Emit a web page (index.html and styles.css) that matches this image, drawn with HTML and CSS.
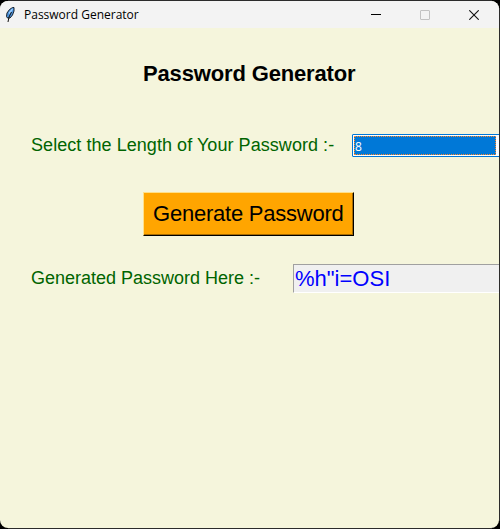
FILE: index.html
```html
<!DOCTYPE html>
<html lang="en">
<head>
<meta charset="utf-8">
<title>Password Generator</title>
<link rel="stylesheet" href="styles.css">
</head>
<body>
<div class="window">
  <header class="titlebar">
    <svg class="feather" width="12" height="18" viewBox="0 0 12 18">
      <path d="M2.5 12L1.5 10.5L2 7L4.5 3.5L7.5 1.5L9 1.5L9 5L7.5 9L5 12Z" fill="#4b91dc" stroke="#17212d" stroke-width="1"/>
      <path d="M4 7.5L7.5 3" stroke="#9fd0ff" stroke-width="1.3"/>
      <path d="M6.5 6L4 11L3 16" fill="none" stroke="#111" stroke-width="1"/>
    </svg>
    <span class="caption">Password Generator</span>
    <div class="controls">
      <svg width="10" height="10"><path d="M0 4.5H10" stroke="#000"/></svg>
      <svg width="10" height="10"><rect x=".5" y=".5" width="9" height="9" rx=".5" fill="none" stroke="#c2c2c2"/></svg>
      <svg width="10" height="10"><path d="M.3 .3L9.7 9.7M9.7 .3L.3 9.7" stroke="#111" stroke-width="1.1"/></svg>
    </div>
  </header>
  <main class="content">
    <h1 class="heading">Password Generator</h1>
    <div class="row length-row">
      <label class="label length-label">Select the Length of Your Password :-</label>
      <div class="combo"><div class="selection">8</div></div>
    </div>
    <button class="generate">Generate Password</button>
    <div class="row result-row">
      <label class="label result-label">Generated Password Here :-</label>
      <div class="entry">%h"i=OSI</div>
    </div>
  </main>
</div>
</body>
</html>
```
FILE: styles.css
```css
* { box-sizing: border-box; }
body {
  margin: 0;
  width: 500px;
  height: 529px;
  overflow: hidden;
  background:
    linear-gradient(#000, #000) 0 0 / 8px 8px no-repeat,
    linear-gradient(#000, #000) 100% 0 / 8px 8px no-repeat,
    linear-gradient(#000, #000) 0 100% / 8px 8px no-repeat,
    linear-gradient(#000, #000) 100% 100% / 8px 8px no-repeat,
    #2b2b2b;
  font-family: "Liberation Sans", Arial, sans-serif;
  padding: 1px 1px 1px 0;
}
.window {
  width: 499px;
  height: 527px;
  border-radius: 8px;
  overflow: hidden;
  background: #f5f5dc;
}
.titlebar {
  height: 27px;
  background: #f3f3f3;
  display: flex;
  align-items: center;
  padding-left: 5px;
}
.feather { flex: none; }
.caption {
  margin-left: 7px;
  font: 12px/16px "Open Sans", "Noto Sans", sans-serif;
  color: #000;
  white-space: nowrap;
}
.controls {
  margin-left: auto;
  margin-right: 20px;
  display: flex;
  gap: 39px;
}
.controls svg { display: block; }
.content { display: flex; flex-direction: column; }
.heading {
  margin: 33px 0 0 143px;
  font-size: 22px;
  line-height: 26px;
  font-weight: bold;
  letter-spacing: -0.15px;
  white-space: nowrap;
}
.row { display: flex; white-space: nowrap; }
.length-row { margin-top: 47px; height: 23px; }
.label {
  margin-left: 31px;
  flex: none;
  font-size: 18px;
  line-height: 22px;
  color: #006400;
}
.length-label { width: 321px; letter-spacing: 0.055px; }
.result-label { width: 262px; padding-top: 3px; }
.combo {
  flex: none;
  width: 160px;
  height: 23px;
  border: 1px solid #0078d7;
  border-radius: 1px;
  background: #fff;
  padding: 1px;
  display: flex;
}
.selection {
  width: 142px;
  height: 19px;
  background: #0078d7;
  border: 1px dotted #ff8728;
  color: #fff;
  font: 12px/19px "Open Sans", "Noto Sans", sans-serif;
}
.generate {
  margin: 35px 0 0 143px;
  width: 211px;
  height: 44px;
  padding: 0 0 1px 9px;
  border: 1px solid;
  border-color: #ffe08a #000 #000 #ffe08a;
  box-shadow: inset -1px -1px #a86c00;
  background: #ffa500;
  font: 22px/40px "Liberation Sans", Arial, sans-serif;
  letter-spacing: -0.23px;
  color: #000;
  text-align: left;
  white-space: nowrap;
}
.result-row { margin-top: 28px; }
.entry {
  flex: none;
  width: 230px;
  height: 29px;
  border: 1px solid;
  border-color: #a0a0a0 #fff #fff #a0a0a0;
  background: #f0f0f0;
  padding-left: 1px;
  font-size: 22px;
  line-height: 27px;
  color: #00f;
}
```
